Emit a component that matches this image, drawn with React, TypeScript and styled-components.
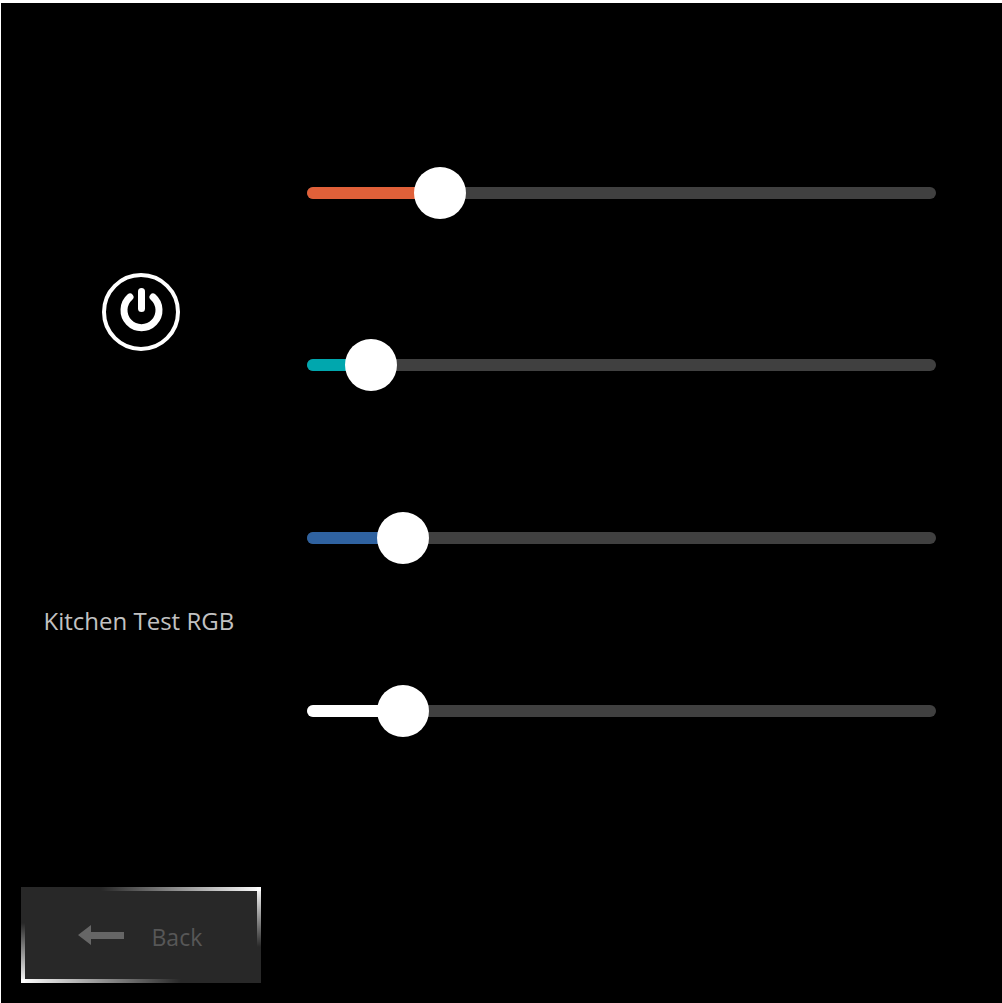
import React, { FC } from 'react';
import styled, { createGlobalStyle } from 'styled-components';

const GlobalStyle = createGlobalStyle`
	html,
	body {
		margin: 0;
		padding: 0;
		height: 100%;
		background: #fff;
		overflow: hidden;
	}
`;

const sliders = [
	{ id: 'red', color: '#e06039', at: 133 },
	{ id: 'green', color: '#00a7ae', at: 64 },
	{ id: 'blue', color: '#2f62a0', at: 96 },
	{ id: 'white', color: '#ffffff', at: 96 },
];

const App: FC = () => {
	return (
		<Screen>
			<GlobalStyle />
			<SidePanel>
				<PowerButton aria-label="Power">
					<svg width="78" height="78" viewBox="0 0 78 78" fill="none" stroke="#fff" strokeLinecap="round">
						<circle cx="39" cy="39" r="37" strokeWidth="4" />
						<path d="M28 24A17.5 17.5 0 1 0 51 24" strokeWidth="7" />
						<path d="M39.5 18.5V35.5" strokeWidth="7" />
					</svg>
				</PowerButton>
				<DeviceName>Kitchen Test RGB</DeviceName>
				<BackButton>
					<svg width="46" height="20" viewBox="0 0 46 20" fill="#666">
						<path d="M0 10L13 0V7H46V14H13V20Z" />
					</svg>
					<BackText>Back</BackText>
				</BackButton>
			</SidePanel>
			<SliderList>
				{sliders.map((slider) => (
					<SliderRow key={slider.id}>
						<Track>
							<Fill $color={slider.color} $width={slider.at} />
							<Thumb $left={slider.at} />
						</Track>
					</SliderRow>
				))}
			</SliderList>
		</Screen>
	);
};

export default App;

const Screen = styled.div`
	display: flex;
	height: 1000px;
	margin: 3px 0 0 1px;
	background: #000;
	font-family: 'Open Sans', 'Noto Sans', sans-serif;
`;

const SidePanel = styled.div`
	display: flex;
	flex-direction: column;
	width: 306px;
	flex: none;
	padding: 270px 0 0 20px;
	box-sizing: border-box;
`;

const PowerButton = styled.button`
	width: 78px;
	height: 78px;
	margin-left: 81px;
	padding: 0;
	border: 0;
	background: transparent;
	cursor: pointer;

	svg {
		display: block;
	}
`;

const DeviceName = styled.div`
	margin: 253px 0 0 22.5px;
	font-size: 24px;
	line-height: 34px;
	color: #c2c2c2;
	white-space: nowrap;
`;

const BackButton = styled.button`
	display: flex;
	align-items: center;
	width: 240px;
	height: 96px;
	margin-top: 249px;
	padding: 0 0 0 57px;
	border: 0;
	box-sizing: border-box;
	cursor: pointer;
	font-family: inherit;
	background:
		linear-gradient(to right, transparent, #fff) top right / 160px 4px no-repeat,
		linear-gradient(to bottom, #fff, transparent) top right / 4px 60px no-repeat,
		linear-gradient(to left, transparent, #fff) bottom left / 160px 4px no-repeat,
		linear-gradient(to top, #fff, transparent) bottom left / 4px 60px no-repeat,
		#282828;

	svg {
		flex: none;
	}
`;

const BackText = styled.span`
	margin: 4px 0 0 27.5px;
	font-size: 23px;
	line-height: 34px;
	color: #575757;
`;

const SliderList = styled.div`
	display: flex;
	flex-direction: column;
	gap: 120.65px;
	width: 629px;
	padding-top: 163.8px;
`;

const SliderRow = styled.div`
	display: flex;
	align-items: center;
	height: 52px;
`;

const Track = styled.div`
	position: relative;
	width: 100%;
	height: 12px;
	border-radius: 6px;
	background: #404040;
`;

const Fill = styled.div<{ $color: string; $width: number }>`
	width: ${(p) => p.$width}px;
	height: 100%;
	border-radius: 6px 0 0 6px;
	background: ${(p) => p.$color};
`;

const Thumb = styled.div<{ $left: number }>`
	position: absolute;
	top: -20px;
	left: ${(p) => p.$left - 26}px;
	width: 52px;
	height: 52px;
	border-radius: 50%;
	background: #fff;
`;
